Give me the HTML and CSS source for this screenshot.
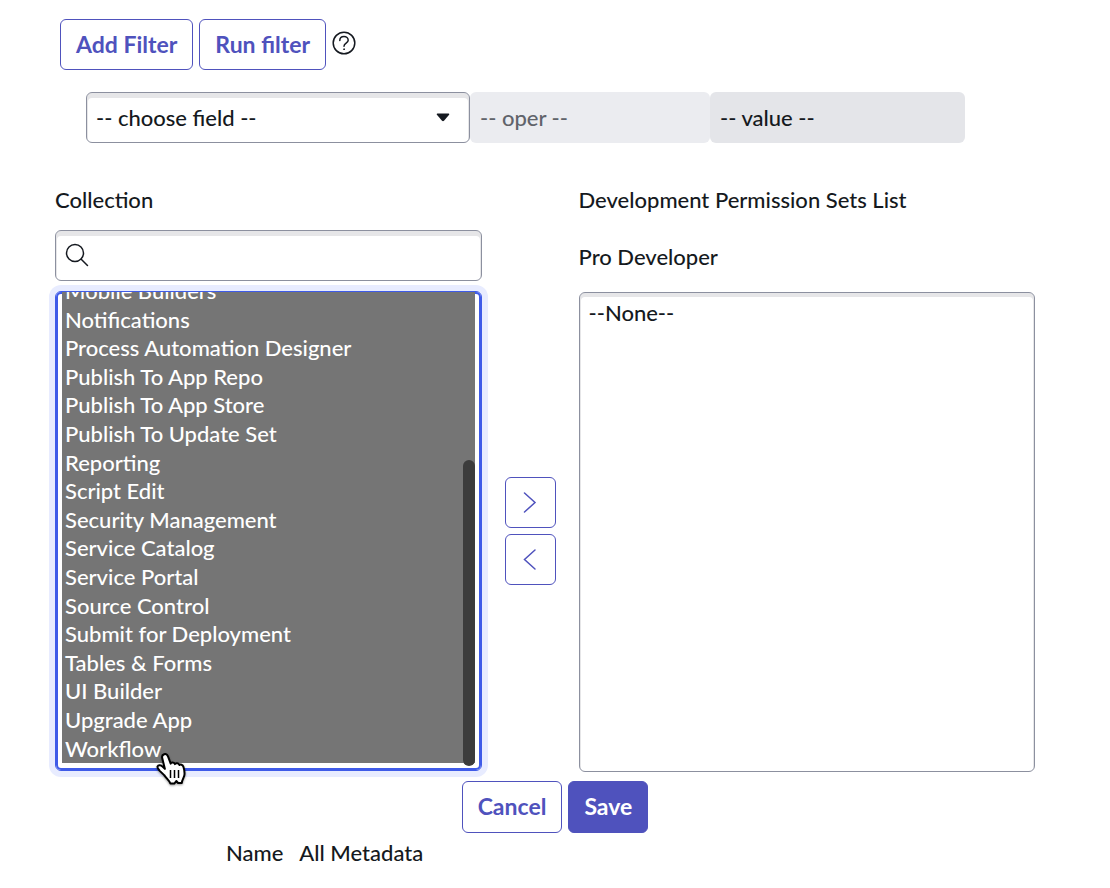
FILE: index.html
```html
<!DOCTYPE html>
<html lang="en">
<head>
<meta charset="utf-8">
<meta name="viewport" content="width=device-width, initial-scale=1">
<title>Developer permissions</title>
<link rel="stylesheet" href="styles.css">
</head>
<body>
<form class="page">
  <div class="toolbar">
    <button type="button" class="btn">Add Filter</button>
    <button type="button" class="btn">Run filter</button>
    <button type="button" class="help" aria-label="Help">
      <svg width="24" height="24" viewBox="0 0 24 24" fill="none" stroke="#151920" stroke-width="1.5" stroke-linecap="round"><circle cx="12" cy="12" r="10.8"/><path d="M7.800 9.600C7.800 7.100 9.600 5.600 12 5.600s4.200 1.600 4.200 3.700c0 2.900-4.200 2.900-4.200 5.900"/><circle cx="12" cy="18.200" r=".5" fill="#151920" stroke-width=".8"/></svg>
    </button>
  </div>

  <div class="filter">
    <div class="field-wrap">
      <select class="control field" aria-label="Field"><option>-- choose field --</option></select>
      <svg class="caret" width="14" height="9" viewBox="0 0 14 9" aria-hidden="true"><path d="M1.4.5h11.2q1.2.2.5 1.2L8 7.8q-1 .9-2 0L.9 1.7Q.2.7 1.4.5z" fill="#151920"/></svg>
    </div>
    <select class="control oper" aria-label="Operator" disabled><option>-- oper --</option></select>
    <input class="control value" aria-label="Value" value="-- value --" disabled>
  </div>

  <div class="slush">
    <div class="available">
      <label class="label" for="collection">Collection</label>
      <div class="search-wrap">
        <svg class="search-icon" width="24" height="24" viewBox="0 0 24 24" fill="none" stroke="#151920" stroke-width="1.5" stroke-linecap="round" aria-hidden="true"><circle cx="10" cy="10" r="8.5"/><path d="M16.2 16.2l6.3 6.3"/></svg>
        <input class="control search" type="text" aria-label="Search collection">
      </div>
      <div class="list-wrap">
        <select class="list list-active" id="collection" multiple>
          <option selected>Mobile Builders</option>
          <option selected>Notifications</option>
          <option selected>Process Automation Designer</option>
          <option selected>Publish To App Repo</option>
          <option selected>Publish To App Store</option>
          <option selected>Publish To Update Set</option>
          <option selected>Reporting</option>
          <option selected>Script Edit</option>
          <option selected>Security Management</option>
          <option selected>Service Catalog</option>
          <option selected>Service Portal</option>
          <option selected>Source Control</option>
          <option selected>Submit for Deployment</option>
          <option selected>Tables &amp; Forms</option>
          <option selected>UI Builder</option>
          <option selected>Upgrade App</option>
          <option selected>Workflow</option>
        </select>
        <span class="thumb"></span>
        <svg class="pointer" width="34" height="38" viewBox="0 0 34 38" aria-hidden="true"><path d="M9.2 3.2c1.8-.6 3.1.3 3.8 2.2l2.7 7.2c.2-1.5 3.6-1.7 4.3.5.6-1.4 3.8-1.3 4.4 1 1-1 3.3-.5 4 1.6.8 2.5 1.4 5.700 1 8.500-.3 2.300-2.300 4.200-2.600 7.800h-3.700l-1.800-2-2 2.600h-3.900c-.8-3.200-4.200-5.300-6.200-8.500L4.500 19.600C3.300 17.800 2.100 16.500 2.500 15.500c.7-1.700 3.600-1.400 5 .1l2.400 2.300L7.200 6.900c-.4-1.600.3-3.100 2-3.700z" fill="#fff" stroke="#000" stroke-width="2" stroke-linejoin="round"/><path d="M15.500 19v8M19.500 19v8M23.500 19v8" stroke="#000" stroke-width="1.5" fill="none"/></svg>
      </div>
    </div>

    <div class="movers">
      <button type="button" class="mover" aria-label="Add"><svg width="24" height="24" viewBox="0 0 24 24"><path d="M6.500 2l10.500 9.500-10.500 9.500"/></svg></button>
      <button type="button" class="mover" aria-label="Remove"><svg width="24" height="24" viewBox="0 0 24 24"><path d="M17 2L6.500 11.500 17 21"/></svg></button>
    </div>

    <div class="chosen">
      <div class="label">Development Permission Sets List</div>
      <label class="label" for="developer">Pro Developer</label>
      <select class="list" id="developer" multiple><option>--None--</option></select>
    </div>
  </div>

  <div class="actions">
    <button type="button" class="btn">Cancel</button>
    <button type="button" class="btn btn-primary">Save</button>
  </div>
  <div class="summary"><span>Name</span><span>All Metadata</span></div>
</form>
<script>
  const list = document.getElementById("collection");
  list.scrollTop = list.scrollHeight;
</script>
</body>
</html>
```
FILE: styles.css
```css
* { box-sizing: border-box; }
body {
  margin: 0;
  background: #fff;
  color: #151920;
  font-family: Lato, "Liberation Sans", sans-serif;
  font-size: 22px;
  font-weight: 500;
  line-height: 28px;
}
button, input, select { font: inherit; color: inherit; margin: 0; }
.page { padding: 19px 0 20px; }

.toolbar { display: flex; align-items: center; gap: 6px; padding-left: 60px; }
.btn {
  height: 51px;
  padding: 0 15px 2px;
  border: 1px solid #4f52bd;
  border-radius: 6px;
  background: #fff;
  color: #4f52bd;
  font-size: 23px;
  font-weight: 700;
}
.btn-primary { background: #4f52bd; color: #fff; }
.help { display: flex; padding: 0 0 4px; border: 0; background: none; }

.filter {
  display: grid;
  grid-template-columns: 384fr 240fr 255fr;
  padding: 22px 145px 0 86px;
}
.control {
  display: block;
  width: 100%;
  height: 51px;
  padding: 0 9px;
  border: 1px solid #8c909f;
  border-radius: 6px;
  background: #fff;
  box-shadow: inset 0 4px 0 1px #e6e6e8;
  appearance: none;
}
.field-wrap, .search-wrap, .list-wrap { position: relative; }
.caret { position: absolute; right: 20px; top: 21px; }
.oper, .value { border-color: transparent; box-shadow: none; opacity: 1; }
.oper { background: #ebecf0; color: #60636a; }
.value { background: #e4e5e9; color: #151920; }

.slush {
  display: grid;
  grid-template-columns: 427fr 51px 457fr;
  column-gap: 23px;
  padding: 43px 75px 0 55px;
}
.available, .chosen { display: flex; flex-direction: column; min-width: 0; }
.search-wrap { margin: 16px 0 10px; }
.search-icon { position: absolute; left: 10px; top: 13px; }
.search { padding-left: 42px; }
.list {
  display: block;
  width: 100%;
  height: 480px;
  padding: 6px;
  border: 1px solid #8c909f;
  border-radius: 6px;
  background: #fff;
  box-shadow: inset 0 3px 0 1px #e6e6e8;
  outline: 0;
  scrollbar-width: none;
}
.list option { height: 1.3em; padding: 0 3px; font-weight: 500; }
.list-active { padding-bottom: 7px; border-color: #3f5be8; box-shadow: inset 0 0 0 2px #3f5be8, 0 0 0 6px #e8ecff; }
.list-active option:checked {
  background: linear-gradient(#757575, #757575);
  -webkit-text-fill-color: #fff;
}
.thumb {
  position: absolute;
  right: 7px;
  bottom: 5px;
  width: 12px;
  height: 306px;
  border-radius: 6px;
  background: #3c3c3c;
}
.pointer { position: absolute; left: 100px; bottom: -18px; filter: drop-shadow(0 1px 1px #0006); }

.movers { display: flex; flex-direction: column; justify-content: flex-end; gap: 6px; padding-bottom: 187px; }
.mover {
  display: grid;
  place-items: center;
  height: 51px;
  padding: 0;
  border: 1px solid #4f52bd;
  border-radius: 6px;
  background: #fff;
}
.mover path { fill: none; stroke: #4f52bd; stroke-width: 1.5; stroke-linecap: round; }
.chosen .label + .label { margin: 29px 0 21px; }

.actions { display: flex; justify-content: center; gap: 6px; padding-top: 9px; }
.actions .btn { height: 52px; }
.summary { display: flex; gap: 16px; padding: 6px 0 0 226px; }
```
